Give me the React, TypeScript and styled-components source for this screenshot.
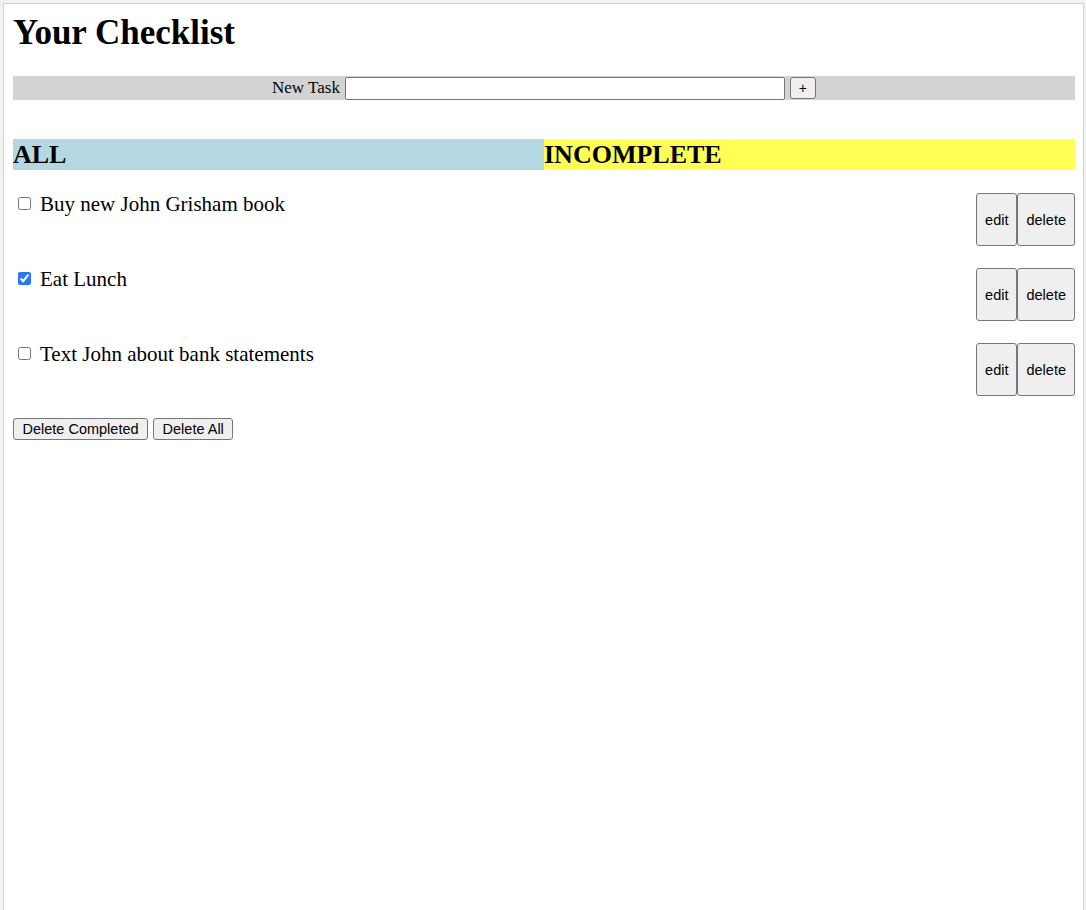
import { FC, useState } from "react";
import styled, { createGlobalStyle } from "styled-components";

const GlobalStyle = createGlobalStyle`
    html, body {
        margin:0;
        background:#f2f2f2;
    }
    body {
        font-family:"Liberation Serif", "Times New Roman", serif;
        color:#000;
    }
`
const Frame = styled.div`
    box-sizing:border-box;
    width:1081px;
    min-height:907px;
    margin:3px 0 0 3px;
    padding:9px 8px 0 9px;
    background:#fff;
    border:1px solid #cfcfcf;
    border-bottom:none;
`
const Title = styled.h1`
    margin:0 0 23px;
    font-size:35px;
    line-height:40px;
    font-weight:bold;
`
const TaskForm = styled.form`
    height:24px;
    background:#d3d3d3;
    display:flex;
    align-items:center;
    justify-content:center;
    gap:5px;
    font-size:17px;
`
const TaskInput = styled.input`
    box-sizing:border-box;
    width:440px;
    height:23px;
    margin:0;
    border:1px solid #767676;
    border-radius:2px;
    background:#fff;
`
const NativeButton = styled.button`
    box-sizing:border-box;
    margin:0;
    padding:1px 8px;
    font-family:"Liberation Sans", Arial, sans-serif;
    font-size:14.5px;
    color:#000;
    background:#efefef;
    border:1px solid #767676;
    border-radius:3px;
`
const AddButton = styled(NativeButton)`
    width:26px;
    height:22px;
    padding:0;
    font-size:14px;
`
const Tabs = styled.nav`
    margin-top:39px;
    display:flex;
`
const Tab = styled.h2<{ $bg: string }>`
    flex:1;
    margin:0;
    height:31px;
    font-size:26px;
    line-height:31px;
    font-weight:bold;
    background:${p => p.$bg};
    cursor:pointer;
`
const TaskList = styled.ul`
    list-style:none;
    margin:0;
    padding:23px 0 0;
    display:flex;
    flex-direction:column;
    gap:22px;
`
const TaskRow = styled.li`
    display:flex;
    justify-content:space-between;
    align-items:flex-start;
`
const ItemLabel = styled.label`
    display:flex;
    align-items:flex-start;
    font-size:21px;
    line-height:22px;
`
const Check = styled.input`
    width:13px;
    height:13px;
    margin:4px 9px 0 5px;
    accent-color:#2b77ef;
`
const RowActions = styled.div`
    display:flex;
`
const ActionButton = styled(NativeButton)`
    height:53px;
`
const Footer = styled.div`
    margin-top:22px;
    display:flex;
    gap:5px;
`
const FooterButton = styled(NativeButton)`
    height:22px;
    padding:1px 8.5px;
`

type Task = { id: number, text: string, done: boolean }

const initialTasks: Task[] = [
    { id: 1, text: "Buy new John Grisham book", done: false },
    { id: 2, text: "Eat Lunch", done: true },
    { id: 3, text: "Text John about bank statements", done: false },
]

const App: FC = () => {
    const [tasks, setTasks] = useState<Task[]>(initialTasks);
    const [draft, setDraft] = useState("");

    const toggle = (id: number) =>
        setTasks(ts => ts.map(t => t.id === id ? { ...t, done: !t.done } : t));

    return (
        <>
            <GlobalStyle />
            <Frame>
                <Title>Your Checklist</Title>
                <TaskForm onSubmit={e => {
                    e.preventDefault();
                    if (!draft.trim()) return;
                    setTasks(ts => [...ts, { id: Date.now(), text: draft, done: false }]);
                    setDraft("");
                }}>
                    <span>New Task</span>
                    <TaskInput value={draft} onChange={e => setDraft(e.target.value)} />
                    <AddButton type="submit">+</AddButton>
                </TaskForm>
                <Tabs>
                    <Tab $bg="#b4d7e2">ALL</Tab>
                    <Tab $bg="#ffff55">INCOMPLETE</Tab>
                </Tabs>
                <TaskList>
                    {tasks.map(t => (
                        <TaskRow key={t.id}>
                            <ItemLabel>
                                <Check type="checkbox" checked={t.done} onChange={() => toggle(t.id)} />
                                {t.text}
                            </ItemLabel>
                            <RowActions>
                                <ActionButton>edit</ActionButton>
                                <ActionButton onClick={() => setTasks(ts => ts.filter(x => x.id !== t.id))}>delete</ActionButton>
                            </RowActions>
                        </TaskRow>
                    ))}
                </TaskList>
                <Footer>
                    <FooterButton onClick={() => setTasks(ts => ts.filter(t => !t.done))}>Delete Completed</FooterButton>
                    <FooterButton onClick={() => setTasks([])}>Delete All</FooterButton>
                </Footer>
            </Frame>
        </>
    )
}
export default App
